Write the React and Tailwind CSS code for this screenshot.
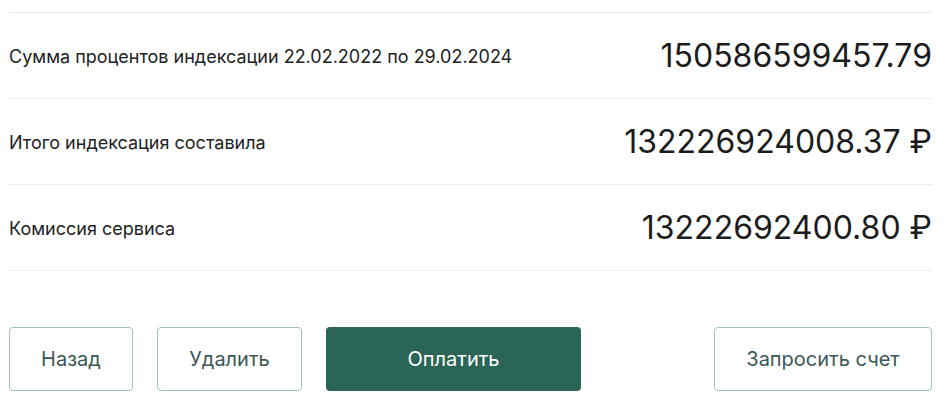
export default function App() {
  const rows = [
    { label: "Сумма процентов индексации 22.02.2022 по 29.02.2024", value: "150586599457.79" },
    { label: "Итого индексация составила", value: "132226924008.37 ₽" },
    { label: "Комиссия сервиса", value: "13222692400.80 ₽" },
  ];
  return (
    <div className="bg-white w-[952px] h-[406px] pl-[9px] pr-[20px] pt-[12px]" style={{ fontFamily: "Inter, 'Noto Sans', sans-serif" }}>
      <div className="border-t border-[#ebebeb]">
        {rows.map((r, i) => (
          <div key={i} className="h-[86px] border-b border-[#ebebeb] flex items-center justify-between">
            <span className="text-[18px] text-[#222] pt-px">{r.label}</span>
            <span className="text-[32px] text-[#1c1c1c] leading-none">{r.value}</span>
          </div>
        ))}
      </div>
      <div className="mt-[56px] flex items-center justify-between">
        <div className="flex items-center gap-6">
          <button className="h-[64px] w-[124px] border border-[#9fc3bc] rounded-[4px] text-[20px] text-[#3b5856] bg-white">Назад</button>
          <button className="h-[64px] w-[145px] border border-[#9fc3bc] rounded-[4px] text-[20px] text-[#3b5856] bg-white">Удалить</button>
          <button className="h-[64px] w-[255px] rounded-[4px] text-[20px] text-white bg-[#2b6556]">Оплатить</button>
        </div>
        <button className="h-[64px] w-[218px] border border-[#9fc3bc] rounded-[4px] text-[20px] text-[#3b5856] bg-white">Запросить счет</button>
      </div>
    </div>
  );
}
